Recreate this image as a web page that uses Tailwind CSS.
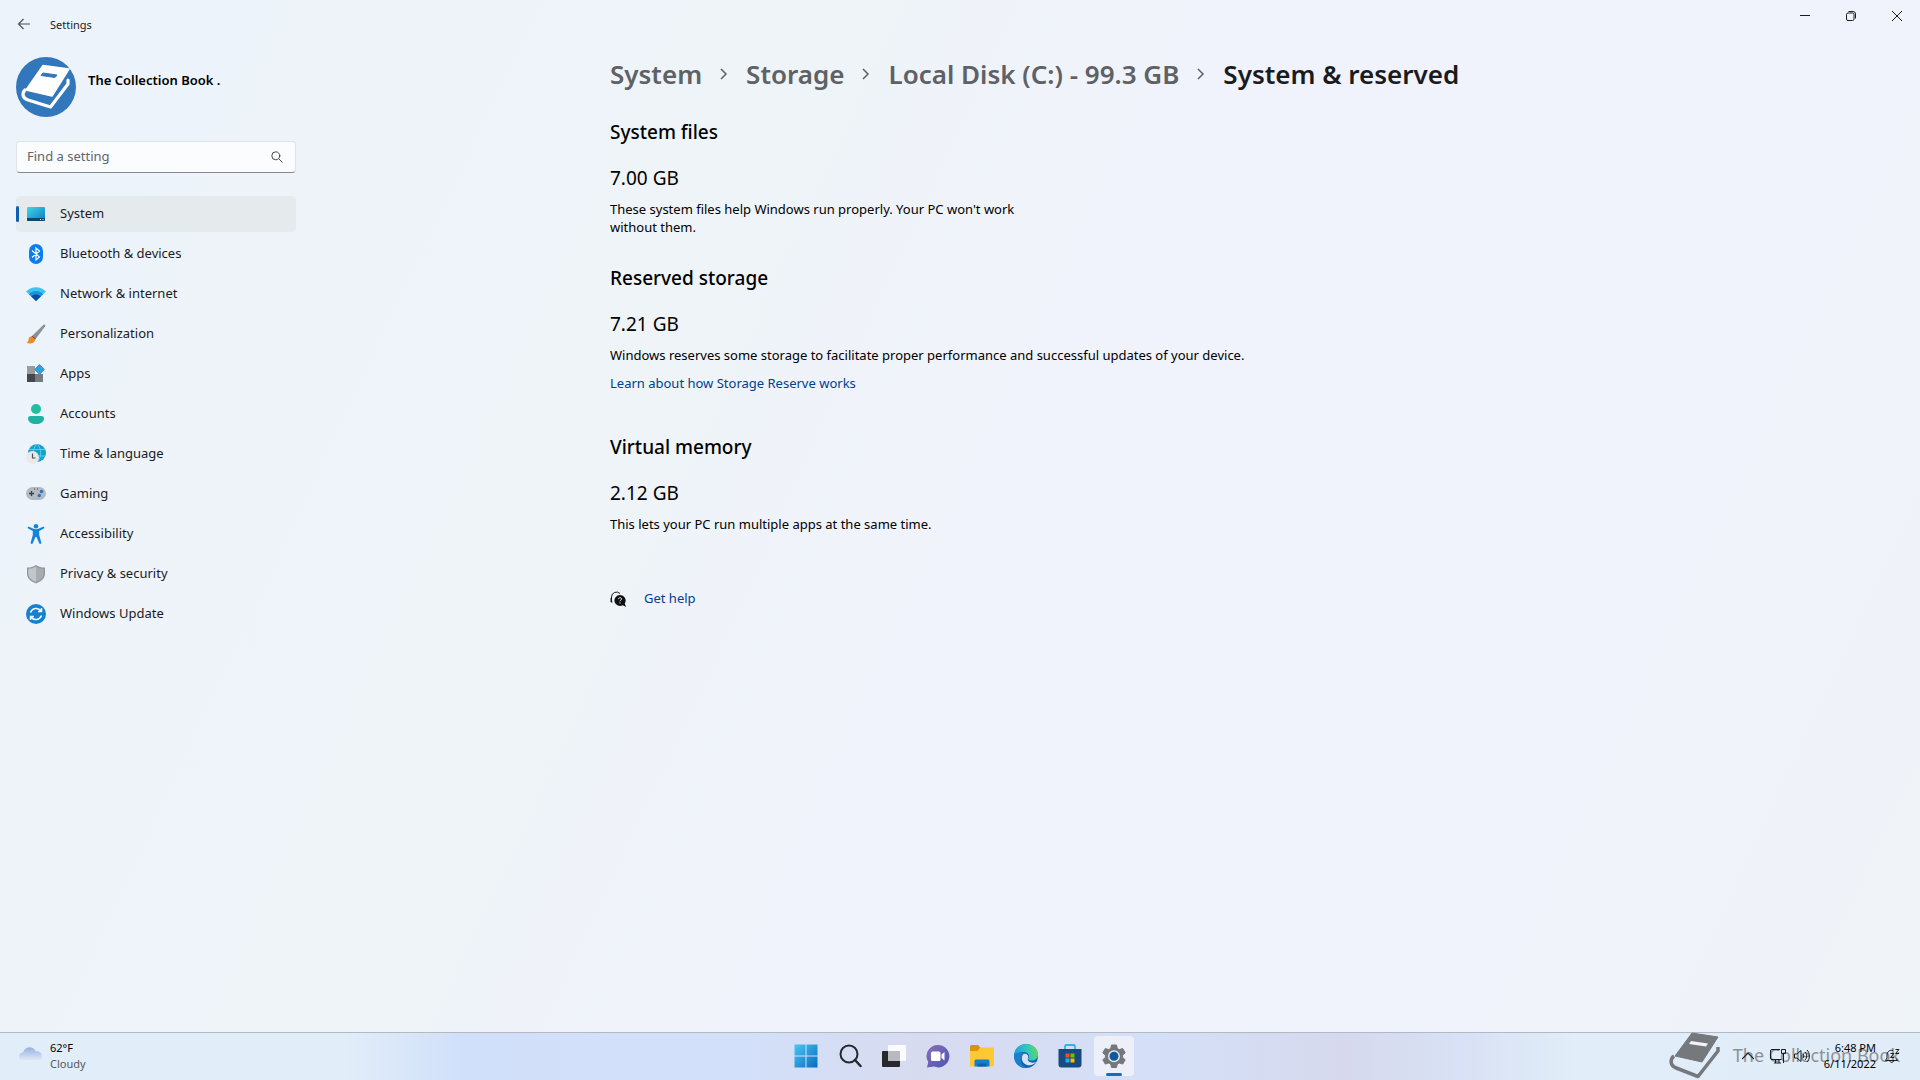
<!DOCTYPE html>
<html lang="en">
<head>
  <meta charset="UTF-8">
  <meta name="viewport" content="width=device-width, initial-scale=1.0">
  <title>Settings</title>
  <script src="https://cdn.jsdelivr.net/npm/@tailwindcss/browser@4"></script>
</head>
<body class="flex h-screen flex-col overflow-hidden bg-[linear-gradient(115deg,#edf3fb_0%,#eef4f8_32%,#f0f3fb_50%,#f0f3fb_80%,#eff4f8_100%)] font-['Noto_Sans',sans-serif] text-[13px] text-[#1b1b1f]">

  <!-- Title bar -->
  <header class="flex h-12 shrink-0 items-start justify-between">
    <div class="flex h-12 items-center gap-[18px] pl-4">
      <button aria-label="Back" class="h-4 w-4">
        <svg class="h-4 w-4" viewBox="0 0 16 16" fill="none" stroke="#4a4d52" stroke-width="1.1"><path d="M14 8H2.5M7.5 3L2.5 8l5 5"/></svg>
      </button>
      <span class="pt-0.5 text-[11px]">Settings</span>
    </div>
    <div class="flex">
      <button aria-label="Minimize" class="flex h-8 w-[46px] items-center justify-center">
        <svg class="h-3 w-3" viewBox="0 0 12 12" stroke="#1b1b1b"><path d="M1 5.5h10"/></svg>
      </button>
      <button aria-label="Restore" class="flex h-8 w-[46px] items-center justify-center">
        <svg class="h-3 w-3" viewBox="0 0 12 12" fill="none" stroke="#1b1b1b"><rect x="1.5" y="3" width="7.5" height="7.5" rx="1.5"/><path d="M3.5 1.5h4.5a2.5 2.5 0 0 1 2.5 2.5v4.5"/></svg>
      </button>
      <button aria-label="Close" class="flex h-8 w-[46px] items-center justify-center">
        <svg class="h-3 w-3" viewBox="0 0 12 12" stroke="#1b1b1b"><path d="M1 1l10 10M11 1L1 11"/></svg>
      </button>
    </div>
  </header>

  <div class="flex min-h-0 flex-1">
    <!-- Sidebar -->
    <aside class="w-80 shrink-0 pl-4 pr-6 pt-[9px]">
      <div class="flex items-center gap-3">
        <svg class="h-[60px] w-[60px] shrink-0" viewBox="0 0 60 60">
          <circle cx="30" cy="30" r="30" fill="#3277bc"/>
          <path d="M27 8.5L53 12 36 39 10 33z" fill="#fff" stroke="#fff" stroke-width="1.5" stroke-linejoin="round"/>
          <path d="M27 16l14 2-2 2.500-14-2z" fill="#3277bc" stroke="#3277bc" stroke-linejoin="round"/>
          <path d="M9 33c-3 3-3 8 3 10l22.500 7L52 27v-4" fill="none" stroke="#fff" stroke-width="3.2" stroke-linejoin="round" stroke-linecap="round"/>
        </svg>
        <span class="pb-3 font-semibold text-black">The Collection Book .</span>
      </div>

      <div class="mt-6 flex h-8 items-center rounded border border-[#dfe3e8] border-b-[#85888c] bg-[#fbfcfe] pl-2.5 pr-3">
        <input type="text" aria-label="Find a setting" placeholder="Find a setting" class="min-w-0 flex-1 bg-transparent outline-none placeholder:text-[#62656a]">
        <svg class="h-3 w-3" viewBox="0 0 12 12" fill="none" stroke="#44474c" stroke-linecap="round"><circle cx="4.8" cy="4.8" r="4"/><path d="M7.8 7.8L11.3 11.3"/></svg>
      </div>

      <nav class="mt-[23px]">
        <ul class="space-y-1">
          <li>
            <a href="#" aria-current="page" class="relative flex h-9 items-center gap-3.5 rounded bg-[#e5eaed] pl-2.5">
              <span class="absolute left-0 top-2.5 h-4 w-[3px] rounded-full bg-[#0c5fb4]"></span>
              <svg class="h-5 w-5" viewBox="0 0 20 20"><defs><linearGradient id="screen" x1="0" y1="0" x2="1" y2="1"><stop offset="0" stop-color="#3fd6e4"/><stop offset="1" stop-color="#0f7ac8"/></linearGradient></defs><rect x="1" y="3" width="18" height="14" rx="1" fill="url(#screen)"/><path d="M1 14h18v2a1 1 0 0 1-1 1H2a1 1 0 0 1-1-1z" fill="#0b4a6e"/><path d="M14 15.5h1M16.5 15.5h1" stroke="#fff"/></svg>
              System
            </a>
          </li>
          <li>
            <a href="#" class="flex h-9 items-center gap-3.5 rounded pl-2.5">
              <svg class="h-5 w-5" viewBox="0 0 20 20"><rect x="3" width="14" height="20" rx="7" fill="#0a7df0"/><path d="M6 6.5l7.500 6.500L10 16V4l3.500 3L6 13.500" fill="none" stroke="#fff" stroke-width="1.2"/></svg>
              Bluetooth &amp; devices
            </a>
          </li>
          <li>
            <a href="#" class="flex h-9 items-center gap-3.5 rounded pl-2.5">
              <svg class="h-5 w-5" viewBox="0 0 20 20"><path d="M0 7.5C5.5 1.7 14.5 1.7 20 7.5L10 17z" fill="#3ec5ee"/><path d="M2.8 10.2c4-4.2 10.4-4.2 14.4 0L10 17z" fill="#1b93dc"/><path d="M5.3 12.5c2.700-2.600 6.700-2.600 9.400 0L10 17z" fill="#0d4f9e"/></svg>
              Network &amp; internet
            </a>
          </li>
          <li>
            <a href="#" class="flex h-9 items-center gap-3.5 rounded pl-2.5">
              <svg class="h-5 w-5" viewBox="0 0 20 20"><path d="M6.5 11.5L17.500.8c1-.9 2.400.2 1.700 1.500L10 14.500z" fill="#8c9097"/><path d="M6.5 11.5l3.500 3-1.200 1.500-3.500-3.200z" fill="#6b5a55"/><path d="M5.5 12.300c-2 .3-2.600 1.600-2.900 3.200-.2 1.500-.9 2.600-2.200 3.300 3.200 1.300 8.600.8 8.700-3.300z" fill="#f08a24"/></svg>
              Personalization
            </a>
          </li>
          <li>
            <a href="#" class="flex h-9 items-center gap-3.5 rounded pl-2.5">
              <svg class="h-5 w-5" viewBox="0 0 20 20"><path d="M1 2h8v8H1z" fill="#989ca2"/><path d="M1 10h8v8H1z" fill="#44484d"/><path d="M9 10h8v8H9z" fill="#777b81"/><path d="M13.5.5l5 5-5 5-5-5z" fill="#2aa3e0" stroke="#2aa3e0" stroke-linejoin="round"/></svg>
              Apps
            </a>
          </li>
          <li>
            <a href="#" class="flex h-9 items-center gap-3.5 rounded pl-2.5">
              <svg class="h-5 w-5" viewBox="0 0 20 20"><circle cx="10" cy="5" r="5" fill="#1fbf9f"/><path d="M4.5 12h11a2.5 2.5 0 0 1 2.5 2.5c0 3.500-3.500 5.500-8 5.500s-8-2-8-5.500A2.5 2.5 0 0 1 4.500 12z" fill="#1db3a0"/></svg>
              Accounts
            </a>
          </li>
          <li>
            <a href="#" class="flex h-9 items-center gap-3.5 rounded pl-2.5">
              <svg class="h-5 w-5" viewBox="0 0 20 20"><circle cx="11" cy="9" r="9" fill="#189fd0"/><path d="M11 0c5 4.500 5 13.500 0 18M11 0C6 4.500 6 13.500 11 18M3 5.500h16M3 12h16" fill="none" stroke="#6fd6ee" stroke-width=".8"/><circle cx="6.5" cy="13.5" r="6.5" fill="#e8e9eb"/><path d="M6.5 9.500v4.500H9.500" fill="none" stroke="#5a4a4a" stroke-width="1.2"/></svg>
              Time &amp; language
            </a>
          </li>
          <li>
            <a href="#" class="flex h-9 items-center gap-3.5 rounded pl-2.5">
              <svg class="h-5 w-5" viewBox="0 0 20 20"><rect y="3" width="20" height="13" rx="6.5" fill="#b4b9c2"/><path d="M3 9.500h5M5.500 7v5" stroke="#3b3f46" stroke-width="1.3"/><circle cx="15.5" cy="7.5" r="1.7" fill="#2b74bd"/><circle cx="13.3" cy="11.5" r="1.7" fill="#2b74bd"/><path d="M8 5h1M11 5h1" stroke="#3b3f46"/></svg>
              Gaming
            </a>
          </li>
          <li>
            <a href="#" class="flex h-9 items-center gap-3.5 rounded pl-2.5">
              <svg class="h-5 w-5" viewBox="0 0 20 20" fill="#1583d8"><circle cx="10" cy="2.3" r="2.3"/><path d="M3 2.8l4.500 1.900c1.600.6 3.400.6 5 0L17 2.800c1.200-.4 1.900 1.200.8 1.800L13.200 7v4l2.100 7.600c.3 1.300-1.600 1.900-2.100.6L10.500 13h-1l-2.700 6.200c-.5 1.300-2.400.7-2.100-.6L6.800 11V7L2.200 4.600c-1.100-.6-.4-2.200.8-1.800z"/></svg>
              Accessibility
            </a>
          </li>
          <li>
            <a href="#" class="flex h-9 items-center gap-3.5 rounded pl-2.5">
              <svg class="h-5 w-5" viewBox="0 0 20 20"><path d="M10 1c2.700 1.900 5.700 2.600 9 2.600v6c0 4.700-3.600 7.900-9 9.900-5.400-2-9-5.200-9-9.900v-6C4.300 3.600 7.300 2.900 10 1z" fill="#92969b"/><path d="M10 2.500c2.400 1.500 4.900 2.200 7.700 2.300v4.800c0 3.900-2.900 6.700-7.700 8.500z" fill="#a8abb0"/><path d="M10 2.500C7.600 4 5.100 4.700 2.300 4.800v4.800c0 3.900 2.900 6.700 7.700 8.500z" fill="#c3c6ca"/></svg>
              Privacy &amp; security
            </a>
          </li>
          <li>
            <a href="#" class="flex h-9 items-center gap-3.5 rounded pl-2.5">
              <svg class="h-5 w-5" viewBox="0 0 20 20"><circle cx="10" cy="10" r="10" fill="#1580d2"/><path d="M4.500 8.500A6 6 0 0 1 15 7M15.500 11.500A6 6 0 0 1 5 13M15.500 4v3.500H12M4.500 16v-3.500H8" fill="none" stroke="#fff" stroke-width="1.5"/></svg>
              Windows Update
            </a>
          </li>
        </ul>
      </nav>
    </aside>

    <!-- Page content -->
    <main class="min-w-0 flex-1">
      <div class="mx-auto max-w-[1020px] text-black">
        <nav aria-label="Breadcrumb" class="mt-1.5">
          <ol class="flex h-10 items-center gap-[18px] whitespace-nowrap text-[26px] font-semibold text-[#5e6165]">
            <li><a href="#">System</a></li>
            <li aria-hidden="true"><svg class="h-3 w-2" viewBox="0 0 8 12" fill="none" stroke="#5e6165" stroke-width="1.5"><path d="M1 1l5 5-5 5"/></svg></li>
            <li><a href="#">Storage</a></li>
            <li aria-hidden="true"><svg class="h-3 w-2" viewBox="0 0 8 12" fill="none" stroke="#5e6165" stroke-width="1.5"><path d="M1 1l5 5-5 5"/></svg></li>
            <li><a href="#">Local Disk (C:) - 99.3 GB</a></li>
            <li aria-hidden="true"><svg class="h-3 w-2" viewBox="0 0 8 12" fill="none" stroke="#5e6165" stroke-width="1.5"><path d="M1 1l5 5-5 5"/></svg></li>
            <li aria-current="page" class="text-[#1a1b1d]">System &amp; reserved</li>
          </ol>
        </nav>

        <section class="mt-6">
          <h2 class="text-[19px] leading-7 font-medium">System files</h2>
          <p class="mt-[18px] text-[19px] leading-7">7.00 GB</p>
          <p class="mt-2 max-w-[440px] leading-[18px]">These system files help Windows run properly. Your PC won't work without them.</p>
        </section>

        <section class="mt-7">
          <h2 class="text-[19px] leading-7 font-medium">Reserved storage</h2>
          <p class="mt-[18px] text-[19px] leading-7">7.21 GB</p>
          <p class="mt-2 leading-[18px]">Windows reserves some storage to facilitate proper performance and successful updates of your device.</p>
          <a href="#" class="mt-2.5 block leading-[18px] text-[#003e92]">Learn about how Storage Reserve works</a>
        </section>

        <section class="mt-[41px]">
          <h2 class="text-[19px] leading-7 font-medium">Virtual memory</h2>
          <p class="mt-[18px] text-[19px] leading-7">2.12 GB</p>
          <p class="mt-2 leading-[18px]">This lets your PC run multiple apps at the same time.</p>
        </section>

        <a href="#" class="mt-14 flex items-center gap-[18px] text-[#003e92]">
          <svg class="h-4 w-4" viewBox="0 0 16 16"><path d="M1.5 11V6a5 5 0 0 1 8.500-3.500M1 7v4h1.500" fill="none" stroke="#1b1b1b"/><path d="M10 4a5.500 5.500 0 1 0 2.800 10.200L16 16l-1.200-3.600A5.500 5.500 0 0 0 10 4z" fill="#111"/><path d="M8.500 8.200c0-2 3-2 3-.2 0 1.200-1.500 1.100-1.500 2.300M10 11.500v1" fill="none" stroke="#fff"/></svg>
          Get help
        </a>
      </div>
    </main>
  </div>

  <!-- Taskbar -->
  <footer class="relative flex h-12 shrink-0 items-center justify-between border-t border-[#b3b9c3] bg-[linear-gradient(90deg,#e1edf9_0%,#e1edf8_18%,#d1e0fa_24%,#d3e0f9_39%,#d7dbf0_48%,#d4e0f8_60%,#d6d9ed_70%,#d8e1f5_76%,#e1edf8_82%,#e0ecf8_100%)] pb-0.5">
    <button class="flex items-center gap-2 pl-[18px] text-left text-[11px] leading-4">
      <svg class="h-6 w-6" viewBox="0 0 24 24"><defs><linearGradient id="cloud" x1="0" y1="0" x2="0" y2="1"><stop offset="0" stop-color="#94b0e0"/><stop offset="1" stop-color="#e9effa"/></linearGradient></defs><path d="M5 17.500a4.700 4.700 0 0 1 .2-9.300C7 2 15.500 1.500 17.600 7.200c8.500-.5 8.300 10.300 1.400 10.300z" fill="url(#cloud)"/></svg>
      <span><span class="block text-black">62°F</span><span class="block text-[#54585f]">Cloudy</span></span>
    </button>

    <div class="absolute inset-x-0 mx-auto flex w-max gap-1">
      <button aria-label="Start" class="flex h-10 w-10 items-center justify-center">
        <svg class="h-6 w-6" viewBox="0 0 24 24"><defs><linearGradient id="start" gradientUnits="userSpaceOnUse" x1="0" y1="0" x2="24" y2="24"><stop offset="0" stop-color="#4cc8f5"/><stop offset="1" stop-color="#0669bd"/></linearGradient></defs><path d="M.5.500h11v11h-11zM12.500.500h11v11h-11zM.5 12.500h11v11h-11zM12.500 12.500h11v11h-11z" fill="url(#start)"/></svg>
      </button>
      <button aria-label="Search" class="flex h-10 w-10 items-center justify-center">
        <svg class="h-6 w-6" viewBox="0 0 24 24" fill="none" stroke="#26282c" stroke-linecap="round"><circle cx="11" cy="10" r="8.5" stroke-width="2"/><path d="M17 16l5.500 6" stroke-width="2.5"/></svg>
      </button>
      <button aria-label="Task view" class="flex h-10 w-10 items-center justify-center">
        <svg class="h-6 w-6" viewBox="0 0 24 24"><rect x="0" y="7" width="18" height="16" rx="1" fill="#26282b"/><rect x="6" y="1" width="18" height="16" rx="1" fill="#fafbfd"/><path d="M6 7h12v10H6z" fill="#b9bac0"/></svg>
      </button>
      <button aria-label="Chat" class="flex h-10 w-10 items-center justify-center">
        <svg class="h-6 w-6" viewBox="0 0 24 24"><defs><linearGradient id="chat" x1="0" y1="0" x2="1" y2="1"><stop offset="0" stop-color="#8c6fb5"/><stop offset="1" stop-color="#4b53bc"/></linearGradient></defs><path d="M12 1a11.200 11.200 0 1 1-4 21.600L1 23.500l1.200-5.500A11.200 11.200 0 0 1 12 1z" fill="url(#chat)"/><rect x="5" y="7.5" width="9.5" height="9.5" rx="1.5" fill="#fff"/><path d="M15.500 10.500l3-2.500v8.500l-3-2.500z" fill="#fff"/></svg>
      </button>
      <button aria-label="File Explorer" class="flex h-10 w-10 items-center justify-center">
        <svg class="h-6 w-6" viewBox="0 0 24 24"><path d="M0 2.500A1.500 1.500 0 0 1 1.500 1h6.500l2.500 2.500L8 7H0z" fill="#d6940f"/><path d="M0 7h7.500L10.500 3.500H23a1 1 0 0 1 1 1V21a1.500 1.500 0 0 1-1.500 1.500h-21A1.500 1.500 0 0 1 0 21z" fill="#fcc934"/><path d="M4.500 22.500V17A1.500 1.500 0 0 1 6 15.500h12a1.500 1.500 0 0 1 1.500 1.500v5.500z" fill="#1380cf"/><path d="M7.500 19.500h9v3h-9z" fill="#0c62ae"/></svg>
      </button>
      <button aria-label="Microsoft Edge" class="flex h-10 w-10 items-center justify-center">
        <svg class="h-6 w-6" viewBox="0 0 24 24"><defs><linearGradient id="edge" x1="0" y1="0.5" x2="1" y2="0.3"><stop offset="0" stop-color="#169fd8"/><stop offset=".55" stop-color="#32c6c0"/><stop offset="1" stop-color="#62d957"/></linearGradient></defs><circle cx="12" cy="12" r="12" fill="#1062b0"/><path d="M0 12C.5 5 5.500 0 12 0c7 0 12 4.800 12 10.200 0 4-3 6.300-6.200 6.300-2.600 0-4-1-3.600-1.900 1.800-2.300.5-6.600-4.700-6.600C4.500 8 1 10.500 0 12z" fill="url(#edge)"/><path d="M10 9.500c-3.500 2.500-3 9.500 3 11.500 3.500 1 7.200-.5 9.300-3.200-3.500 1.800-9 .9-8.600-3.200 1.100-1.300 1-4.600-3.700-5.100z" fill="#d9e2f2"/><path d="M10 9.500c-5.500 3-4 12.500 3.500 14.400C6 25 .2 19.500 0 12c2.500-3.500 6.500-4.500 10-2.500z" fill="#1b7fce"/></svg>
      </button>
      <button aria-label="Microsoft Store" class="flex h-10 w-10 items-center justify-center">
        <svg class="h-6 w-6" viewBox="0 0 24 24"><path d="M7 6V2.500A1.500 1.500 0 0 1 8.500 1h7A1.500 1.500 0 0 1 17 2.500V6" fill="none" stroke="#2bb5ea" stroke-width="1.8"/><path d="M.5 5h23v15.500a3 3 0 0 1-3 3h-17a3 3 0 0 1-3-3z" fill="#164a80"/><path d="M7.500 9.500h4v4h-4z" fill="#f25022"/><path d="M12.500 9.500h4v4h-4z" fill="#7fba00"/><path d="M7.500 14.500h4v4h-4z" fill="#28a8ea"/><path d="M12.500 14.500h4v4h-4z" fill="#ffb900"/></svg>
      </button>
      <button aria-label="Settings" class="relative flex h-10 w-10 items-center justify-center rounded bg-[#edf0f9]">
        <svg class="h-6 w-6" viewBox="0 0 24 24"><path d="M9.500 1h5l.8 3.500 2 1.100 3.400-1.100 2.500 4.300-2.600 2.400v2.200l2.600 2.400-2.500 4.300-3.400-1.100-2 1.100-.8 3.400h-5l-.8-3.400-2-1.100-3.400 1.100L.8 15.800l2.600-2.400v-2.200L.8 8.800l2.500-4.300 3.400 1.100 2-1.100z" fill="#74777b" stroke="#74777b" stroke-linejoin="round"/><circle cx="12" cy="12.300" r="6" fill="#e4e8ee"/><circle cx="12" cy="12.300" r="4.500" fill="#11589f"/></svg>
        <span class="absolute bottom-0 left-3 h-[3px] w-4 rounded-full bg-[#0f6fc0]"></span>
      </button>
    </div>

    <!-- Brand overlay, sits under the tray -->
    <div class="pointer-events-none absolute inset-y-0 right-5 flex items-center gap-3 pb-0.5">
      <svg class="h-12 w-[52px]" viewBox="0 0 52 48">
        <path d="M23 1l26 4-16 25-27-6z" fill="#75797e" stroke="#75797e" stroke-linejoin="round"/>
        <path d="M22 9l17 2.500-2 3L20 12z" fill="#eef4fa"/>
        <path d="M5 24c-4 3-4 9 1 11.500l23 9L49 19v-4" fill="none" stroke="#75797e" stroke-width="3.5" stroke-linejoin="round"/>
      </svg>
      <span class="text-[18px] text-[#8b9097]">The Collection Book</span>
    </div>

    <div class="relative flex items-center pr-5 text-[11px] leading-4 text-black">
      <button aria-label="Show hidden icons" class="mr-4"><svg class="h-3 w-3" viewBox="0 0 12 12" fill="none" stroke="#1b1b1b" stroke-width="1.2"><path d="M0 9l6-6 6 6"/></svg></button>
      <button aria-label="Network and volume" class="mr-3.5 flex gap-2">
        <svg class="h-4 w-4" viewBox="0 0 16 16" fill="none" stroke="#1b1b1b"><path d="M10 1.500H2A1.500 1.500 0 0 0 .5 3v7A1.500 1.500 0 0 0 2 11.500h9.500M4 15h7M5.500 12v3M9 12v3M11.500 1.500h4v4h-4zM13.500 5.500V15"/></svg>
        <svg class="h-4 w-4" viewBox="0 0 16 16" fill="none" stroke="#1b1b1b"><path d="M.5 6v4h2.500L7 13.500v-11L3 6zM9 6c1 1 1 3 0 4M11 4c2.200 2 2.200 6 0 8M13 2c3.200 3 3.200 9 0 12"/></svg>
      </button>
      <button class="text-right"><span class="block">6:48 PM</span><span class="block">6/11/2022</span></button>
      <button aria-label="Notifications" class="ml-2"><svg class="h-4 w-4" viewBox="0 0 16 16" fill="none" stroke="#1b1b1b"><path d="M9 2.500C5.500 1.500 3 4 3 7v3L1.500 12.500h12L12 10.500M6 13c.3 2 3 2 3.500 0M6.500 5.500H10l-3.500 4H10M11.500 1.500h3.500l-3.500 4h3.500"/></svg></button>
    </div>
  </footer>
</body>
</html>
